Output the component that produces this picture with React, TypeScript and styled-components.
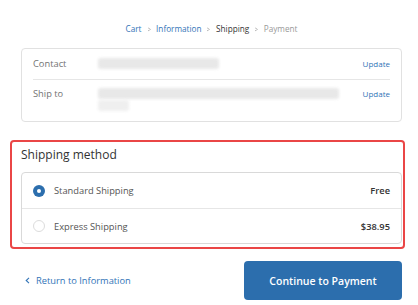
import React from "react";
import styled, { createGlobalStyle } from "styled-components";

const GlobalStyle = createGlobalStyle`
  html, body {
    margin: 0;
    padding: 0;
    background: #ffffff;
  }
  body {
    font-family: "Open Sans", "Liberation Sans", sans-serif;
    color: #545454;
  }
`;

const Page = styled.div`
  width: 418px;
  height: 305px;
  box-sizing: border-box;
  padding: 0 16px 0 21px;
  overflow: hidden;
`;

const Breadcrumb = styled.nav`
  display: flex;
  justify-content: center;
  align-items: center;
  gap: 5px;
  padding-top: 22px;
  margin-bottom: 12px;
  height: 14px;
  font-size: 8.2px;
  line-height: 14px;
`;

const Crumb = styled.span<{ $state: "link" | "current" | "next" }>`
  color: ${(p) =>
    p.$state === "link" ? "#3274b7" : p.$state === "current" ? "#333333" : "#999999"};
`;

const Chevron = styled.span`
  color: #919191;
  font-size: 8px;
  transform: scaleX(0.7);
`;

const ReviewBox = styled.div`
  border: 1px solid #e1e1e1;
  border-radius: 4px;
  padding: 0 11px;
`;

const ReviewRow = styled.div<{ $tall?: boolean }>`
  display: flex;
  align-items: flex-start;
  padding: ${(p) => (p.$tall ? "8px 0 10px" : "9px 0 9px")};
  font-size: 9.3px;
  line-height: 12px;
  & + & {
    border-top: 1px solid #e6e6e6;
  }
`;

const ReviewLabel = styled.div`
  width: 65px;
  flex: none;
  color: #737373;
`;

const ReviewValue = styled.div`
  flex: 1;
  display: flex;
  flex-direction: column;
  gap: 1px;
`;

const Blur = styled.div<{ $w: number; $light?: boolean }>`
  width: ${(p) => p.$w}px;
  height: 11px;
  background: ${(p) => (p.$light ? "#efefef" : "#e8e8e8")};
  border-radius: 3px;
  filter: blur(1.5px);
`;

const UpdateLink = styled.a`
  color: #3274b7;
  font-size: 8px;
  line-height: 12px;
  text-decoration: none;
`;

const MethodSection = styled.section`
  margin: 18px -3px 0 -11px;
  border: 2px solid #ea4646;
  border-radius: 4px;
  padding: 0 1px 3px 9px;
`;

const SectionTitle = styled.h2`
  margin: 0 0 4px;
  font-size: 12px;
  font-weight: 400;
  line-height: 26px;
  color: #333333;
`;

const MethodBox = styled.div`
  border: 1px solid #d9d9d9;
  border-radius: 4px;
`;

const MethodRow = styled.label`
  display: flex;
  align-items: center;
  height: 35px;
  box-sizing: border-box;
  padding: 0 11px;
  font-size: 9.3px;
  & + & {
    border-top: 1px solid #e6e6e6;
  }
`;

const Radio = styled.span<{ $checked?: boolean }>`
  width: 12px;
  height: 12px;
  flex: none;
  box-sizing: border-box;
  border-radius: 50%;
  margin-right: 9px;
  display: flex;
  align-items: center;
  justify-content: center;
  background: ${(p) => (p.$checked ? "#2c6ead" : "#ffffff")};
  border: ${(p) => (p.$checked ? "none" : "1px solid #dcdcdc")};
  &::after {
    content: "";
    width: 4px;
    height: 4px;
    border-radius: 50%;
    background: #ffffff;
    display: ${(p) => (p.$checked ? "block" : "none")};
  }
`;

const MethodName = styled.span`
  flex: 1;
  color: #545454;
`;

const MethodPrice = styled.span`
  font-weight: 600;
  color: #333333;
`;

const Footer = styled.div`
  display: flex;
  align-items: center;
  justify-content: space-between;
  margin-top: 12px;
`;

const BackLink = styled.a`
  display: flex;
  align-items: center;
  gap: 6px;
  padding-left: 4px;
  color: #3274b7;
  font-size: 9.3px;
  text-decoration: none;
`;

const ContinueButton = styled.button`
  width: 158px;
  height: 39px;
  border: none;
  border-radius: 4px;
  background: #2c6ead;
  color: #ffffff;
  font-family: "Open Sans", "Liberation Sans", sans-serif;
  font-size: 10.5px;
  font-weight: 600;
  cursor: pointer;
`;

const ChevronLeft = () => (
  <svg width="5" height="7" viewBox="0 0 5 7">
    <path d="M4 0.8 L1.2 3.5 L4 6.2" fill="none" stroke="#3274b7" strokeWidth="1.1" />
  </svg>
);

export default function App() {
  return (
    <>
      <GlobalStyle />
      <Page>
        <Breadcrumb>
          <Crumb $state="link">Cart</Crumb>
          <Chevron>&gt;</Chevron>
          <Crumb $state="link">Information</Crumb>
          <Chevron>&gt;</Chevron>
          <Crumb $state="current">Shipping</Crumb>
          <Chevron>&gt;</Chevron>
          <Crumb $state="next">Payment</Crumb>
        </Breadcrumb>

        <ReviewBox>
          <ReviewRow>
            <ReviewLabel>Contact</ReviewLabel>
            <ReviewValue>
              <Blur $w={121} />
            </ReviewValue>
            <UpdateLink href="#">Update</UpdateLink>
          </ReviewRow>
          <ReviewRow $tall>
            <ReviewLabel>Ship to</ReviewLabel>
            <ReviewValue>
              <Blur $w={241} />
              <Blur $w={31} $light />
            </ReviewValue>
            <UpdateLink href="#">Update</UpdateLink>
          </ReviewRow>
        </ReviewBox>

        <MethodSection>
          <SectionTitle>Shipping method</SectionTitle>
          <MethodBox>
            <MethodRow>
              <Radio $checked />
              <MethodName>Standard Shipping</MethodName>
              <MethodPrice>Free</MethodPrice>
            </MethodRow>
            <MethodRow>
              <Radio />
              <MethodName>Express Shipping</MethodName>
              <MethodPrice>$38.95</MethodPrice>
            </MethodRow>
          </MethodBox>
        </MethodSection>

        <Footer>
          <BackLink href="#">
            <ChevronLeft />
            Return to Information
          </BackLink>
          <ContinueButton>Continue to Payment</ContinueButton>
        </Footer>
      </Page>
    </>
  );
}
